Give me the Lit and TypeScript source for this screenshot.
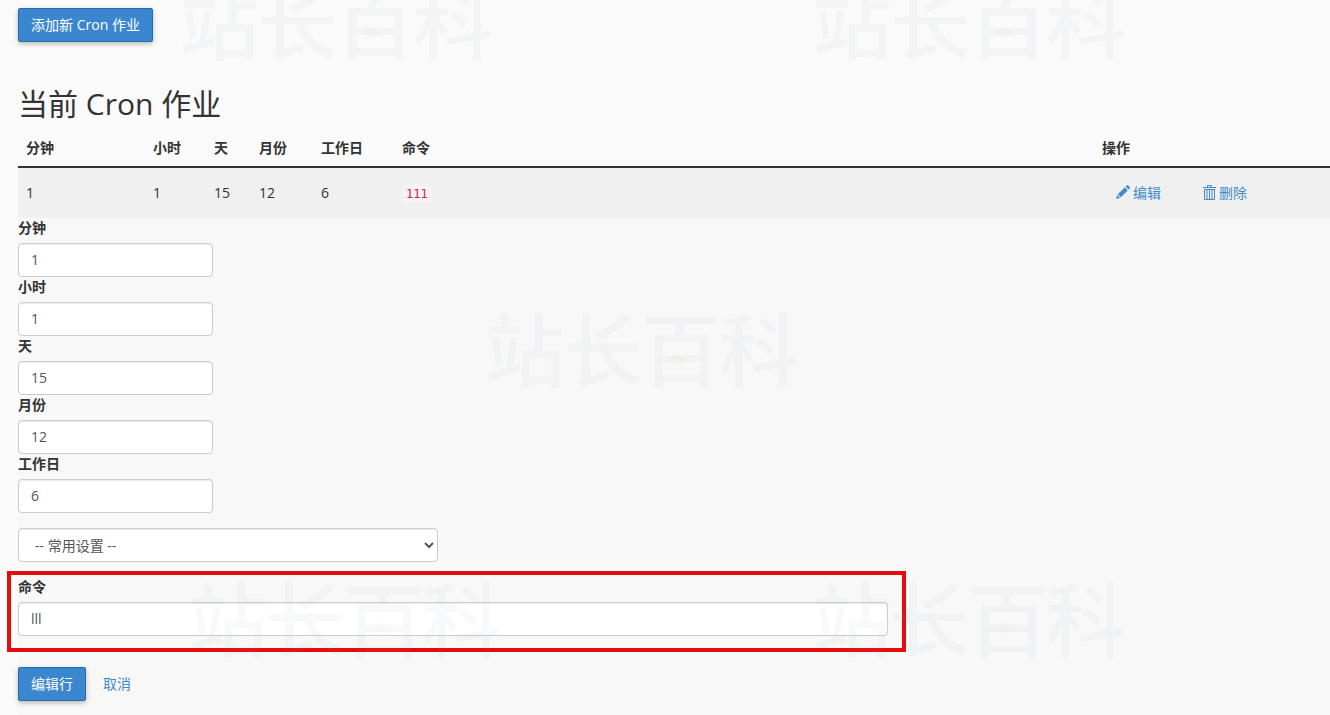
import { LitElement, html, css } from 'lit';
import { customElement, property } from 'lit/decorators.js';
import { classMap } from 'lit/directives/class-map.js';

const FIELDS = [
  { id: 'minute', label: '分钟', value: '1' },
  { id: 'hour', label: '小时', value: '1' },
  { id: 'day', label: '天', value: '15' },
  { id: 'month', label: '月份', value: '12' },
  { id: 'weekday', label: '工作日', value: '6' },
];

/**
 * cron-watermark — Faint site name laid over the page.
 */
@customElement('cron-watermark')
export class CronWatermark extends LitElement {
  static styles = css`
    :host {
      display: block;
      width: 312px;
      height: 84px;
      pointer-events: none;
    }
    svg { display: block; overflow: visible; }
    text {
      font-family: "Noto Sans CJK SC", sans-serif;
      font-size: 80px;
      font-weight: 500;
      fill: #6f93b0;
      fill-opacity: 0.06;
    }
    circle {
      fill: #e8d9a0;
      fill-opacity: 0.06;
    }
  `;

  render() {
    return html`
      <svg width="312" height="84" viewBox="0 0 312 84">
        <text x="-1" y="73" textLength="314">站长百科</text>
        <circle cx="191" cy="52" r="7" />
      </svg>
    `;
  }
}

/**
 * cron-table — List of the current cron jobs.
 */
@customElement('cron-table')
export class CronTable extends LitElement {
  static styles = css`
    :host { display: block; }

    table {
      width: 100%;
      table-layout: fixed;
      border-collapse: separate;
      border-spacing: 0;
    }
    .c-minute { width: 127px; }
    .c-hour { width: 61px; }
    .c-day { width: 45px; }
    .c-month { width: 62px; }
    .c-weekday { width: 81px; }
    .c-command { width: 700px; }

    th, td {
      box-sizing: border-box;
      text-align: left;
      white-space: nowrap;
    }
    th {
      height: 39px;
      padding: 0 8px 8px;
      line-height: 20px;
      vertical-align: bottom;
      font-weight: 700;
      border-bottom: 2px solid #333;
    }
    td {
      height: 50px;
      padding: 0 8px;
      vertical-align: middle;
      background: #f0f0f0;
    }
    code {
      padding: 2px 4px;
      font-family: "DejaVu Sans Mono", monospace;
      font-size: 12px;
      color: #c7254e;
      background: #f9f2f4;
      border-radius: 4px;
    }

    .actions {
      display: flex;
      gap: 41px;
      padding-left: 14px;
    }
    .action {
      display: flex;
      align-items: center;
      gap: 3px;
      color: #428bca;
      text-decoration: none;
    }
    .action + .action { margin-left: 1px; }
    .action svg { display: block; margin-top: -2px; }
  `;

  render() {
    return html`
      <table>
        <colgroup>
          <col class="c-minute" /><col class="c-hour" /><col class="c-day" /><col class="c-month" />
          <col class="c-weekday" /><col class="c-command" /><col />
        </colgroup>
        <thead>
          <tr>
            ${FIELDS.map((f) => html`<th>${f.label}</th>`)}
            <th>命令</th>
            <th>操作</th>
          </tr>
        </thead>
        <tbody>
          <tr>
            ${FIELDS.map((f) => html`<td>${f.value}</td>`)}
            <td><code>111</code></td>
            <td>
              <div class="actions">
                <a class="action">
                  <svg width="14" height="14" viewBox="0 0 14 14" fill="currentColor">
                    <path d="M0 14l1.2-4 2.9 2.8zM1.9 9.2l6.9-6.9 3 3-6.9 6.9zM9.6 1.5l1-1q.8-.8 1.6 0l1.4 1.4q.8.8 0 1.6l-1 1z" />
                  </svg>
                  编辑
                </a>
                <a class="action">
                  <svg width="13" height="15" viewBox="0 0 13 15" fill="none" stroke="currentColor">
                    <path d="M0 2.5h13M4.5 2V.5h4V2M1.5 4v10.5h10V4M1.5 4.5h10" />
                    <path d="M4 5v9M6.5 5v9M9 5v9" />
                  </svg>
                  删除
                </a>
              </div>
            </td>
          </tr>
        </tbody>
      </table>
    `;
  }
}

/**
 * cron-field — Label with a text input below it.
 */
@customElement('cron-field')
export class CronField extends LitElement {
  @property() label = '';
  @property() value = '';
  @property({ type: Boolean }) wide = false;

  static styles = css`
    :host { display: block; }
    label {
      display: block;
      height: 20px;
      margin-bottom: 5px;
      line-height: 20px;
      font-weight: 700;
    }
    input {
      display: block;
      box-sizing: border-box;
      width: 195px;
      height: 34px;
      padding: 5px 12px 7px;
      font: inherit;
      color: #555;
      background: #fff;
      border: 1px solid #ccc;
      border-radius: 4px;
      box-shadow: inset 0 1px 1px rgba(0, 0, 0, 0.075);
    }
    input.wide { width: 870px; }
  `;

  render() {
    return html`
      <label>${this.label}</label>
      <input type="text" class=${classMap({ wide: this.wide })} .value=${this.value} />
    `;
  }
}

@customElement('app-root')
export class AppRoot extends LitElement {
  static styles = css`
    :host {
      display: block;
      position: relative;
      box-sizing: border-box;
      width: 100%;
      height: 715px;
      padding: 8px 0 0 18px;
      overflow: hidden;
      font-family: "Open Sans", "Noto Sans CJK SC", sans-serif;
      font-size: 14px;
      line-height: 20px;
      color: #333;
      background: #fafafa;
    }

    /* ── Buttons ──────────────────── */
    .btn {
      display: block;
      box-sizing: border-box;
      height: 34px;
      padding: 0 12px;
      font: inherit;
      line-height: 32px;
      white-space: nowrap;
      color: #fff;
      background: #3a87cf;
      border: 1px solid #2a6ba6;
      border-radius: 2px;
      box-shadow: 0 2px 5px rgba(0, 0, 0, 0.26);
    }
    .btn-add { width: 135px; }
    .btn-save { width: 68px; }

    h2 {
      height: 33px;
      margin: 45px 0 9px;
      font-size: 30px;
      font-weight: 400;
      line-height: 33px;
    }

    /* ── Edit form ────────────────── */
    .editor {
      height: 497px;
      background: #f8f8f8;
    }
    select {
      display: block;
      box-sizing: border-box;
      width: 420px;
      height: 34px;
      margin: 15px 0;
      padding: 6px 0 6px 12px;
      font: inherit;
      color: #555;
      background: #fff;
      border: 1px solid #ccc;
      border-radius: 4px;
      box-shadow: inset 0 1px 1px rgba(0, 0, 0, 0.075);
    }
    .form-actions {
      display: flex;
      align-items: center;
      gap: 17px;
      margin-top: 31px;
    }
    .cancel { color: #428bca; }

    /* ── Overlays ─────────────────── */
    .highlight {
      position: absolute;
      left: 7px;
      top: 571px;
      box-sizing: border-box;
      width: 899px;
      height: 81px;
      border: 4px solid #e60c0c;
    }
    .mark { position: absolute; }
    .mark-1 { left: 180px; top: -20px; }
    .mark-2 { left: 813px; top: -20px; }
    .mark-3 { left: 486px; top: 307px; }
    .mark-4 { left: 189px; top: 577px; }
    .mark-5 { left: 813px; top: 577px; }
  `;

  render() {
    return html`
      <button class="btn btn-add">添加新 Cron 作业</button>
      <h2>当前 Cron 作业</h2>
      <cron-table></cron-table>

      <div class="editor">
        ${FIELDS.map((f) => html`<cron-field .label=${f.label} .value=${f.value}></cron-field>`)}
        <select>
          <option>-- 常用设置 --</option>
        </select>
        <cron-field label="命令" value="lll" wide></cron-field>
        <div class="form-actions">
          <button class="btn btn-save">编辑行</button>
          <a class="cancel">取消</a>
        </div>
      </div>

      <div class="highlight"></div>
      ${[1, 2, 3, 4, 5].map((n) => html`<cron-watermark class="mark mark-${n}"></cron-watermark>`)}
    `;
  }
}
